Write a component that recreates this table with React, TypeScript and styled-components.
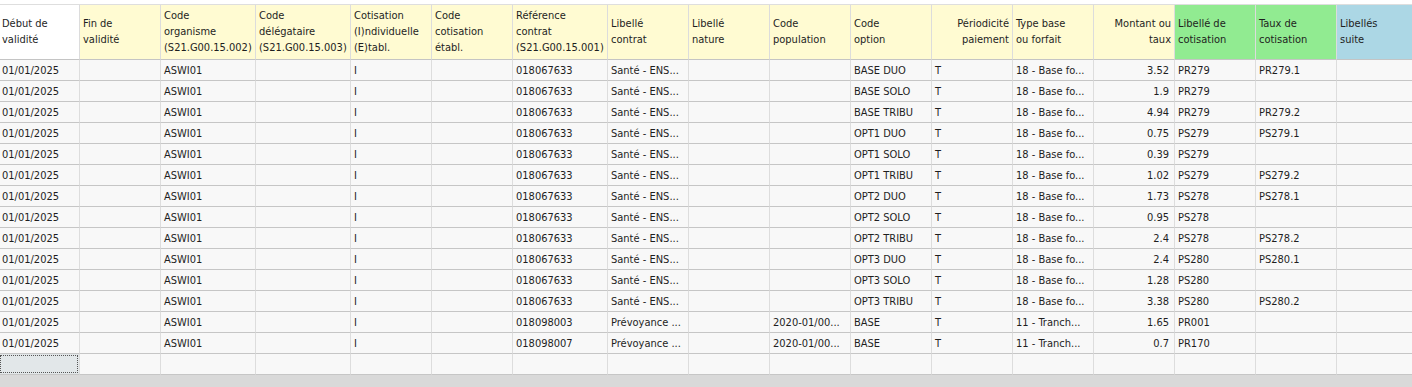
import React from "react";
import styled, { createGlobalStyle, css } from "styled-components";

const GlobalStyle = createGlobalStyle`
  html, body {
    margin: 0;
    padding: 0;
    background: #ffffff;
  }
  body {
    font-family: "DejaVu Sans Condensed", "Liberation Sans", Arial, sans-serif;
    font-size: 11px;
    color: #1e1e1e;
  }
`;

const COLS = "80px 81px 95px 95px 81px 81px 95px 81px 81px 81px 81px 81px 81px 81px 81px 81px 81px";

type Tone = "white" | "yellow" | "green" | "blue";

const toneBg: Record<Tone, string> = {
  white: "#ffffff",
  yellow: "#fffbd2",
  green: "#91eb91",
  blue: "#acd7e5",
};

const Page = styled.div`
  width: 1412px;
  height: 387px;
  overflow: hidden;
  display: flex;
  flex-direction: column;
  padding-top: 4px;
  box-sizing: border-box;
`;

const Sheet = styled.div`
  flex: 1;
  overflow: hidden;
  display: flex;
  flex-direction: column;
`;

const HeaderRow = styled.div`
  display: grid;
  grid-template-columns: ${COLS};
  width: max-content;
  border-top: 1px solid #dedede;
`;

const HeaderCell = styled.div<{ $tone: Tone; $right?: boolean; $first?: boolean }>`
  height: 55px;
  box-sizing: border-box;
  background: ${(p) => toneBg[p.$tone]};
  border-right: 1px solid #dcdcdc;
  border-bottom: 1px solid #c4c4c4;
  padding: 0 ${(p) => (p.$right ? "3px" : "3px")} 0 ${(p) => (p.$first ? "2px" : "3px")};
  display: flex;
  flex-direction: column;
  justify-content: center;
  align-items: ${(p) => (p.$right ? "flex-end" : "flex-start")};
  line-height: 16px;
  white-space: nowrap;
  overflow: hidden;
`;

const DataRow = styled.div`
  display: grid;
  grid-template-columns: ${COLS};
  width: max-content;
`;

const DataCell = styled.div<{ $right?: boolean; $first?: boolean; $selected?: boolean }>`
  height: 21px;
  box-sizing: border-box;
  background: #f8f8f8;
  border-right: 1px solid #dddddd;
  border-bottom: 1px solid #c6c6c6;
  padding: 0 ${(p) => (p.$right ? "5px" : "3px")} 0 ${(p) => (p.$first ? "2px" : "3px")};
  display: flex;
  align-items: center;
  justify-content: ${(p) => (p.$right ? "flex-end" : "flex-start")};
  white-space: nowrap;
  overflow: hidden;
  position: relative;
  ${(p) =>
    p.$selected &&
    css`
      background: #e2e7e9;
      &::after {
        content: "";
        position: absolute;
        inset: 1px 1px 1px 0;
        border: 1px dotted #555;
      }
    `}
`;

const ScrollTrack = styled.div`
  height: 12px;
  background: #d9d9d9;
  flex: none;
`;

type Header = { lines: string[]; tone: Tone; right?: boolean };

const headers: Header[] = [
  { lines: ["Début de", "validité"], tone: "white" },
  { lines: ["Fin de", "validité"], tone: "yellow" },
  { lines: ["Code", "organisme", "(S21.G00.15.002)"], tone: "yellow" },
  { lines: ["Code", "délégataire", "(S21.G00.15.003)"], tone: "yellow" },
  { lines: ["Cotisation", "(I)ndividuelle", "(E)tabl."], tone: "yellow" },
  { lines: ["Code", "cotisation", "établ."], tone: "yellow" },
  { lines: ["Référence", "contrat", "(S21.G00.15.001)"], tone: "yellow" },
  { lines: ["Libellé", "contrat"], tone: "yellow" },
  { lines: ["Libellé", "nature"], tone: "yellow" },
  { lines: ["Code", "population"], tone: "yellow" },
  { lines: ["Code", "option"], tone: "yellow" },
  { lines: ["Périodicité", "paiement"], tone: "yellow", right: true },
  { lines: ["Type base", "ou forfait"], tone: "yellow" },
  { lines: ["Montant ou", "taux"], tone: "yellow", right: true },
  { lines: ["Libellé de", "cotisation"], tone: "green" },
  { lines: ["Taux de", "cotisation"], tone: "green" },
  { lines: ["Libellés", "suite"], tone: "blue" },
];

const RIGHT_COLS = new Set([13]);

type Line = {
  ref: string;
  contrat: string;
  pop: string;
  option: string;
  type: string;
  montant: string;
  libelle: string;
  taux: string;
};

const sante = (option: string, montant: string, libelle: string, taux: string): Line => ({
  ref: "018067633",
  contrat: "Santé - ENS...",
  pop: "",
  option,
  type: "18 - Base fo...",
  montant,
  libelle,
  taux,
});

const lines: Line[] = [
  sante("BASE DUO", "3.52", "PR279", "PR279.1"),
  sante("BASE SOLO", "1.9", "PR279", ""),
  sante("BASE TRIBU", "4.94", "PR279", "PR279.2"),
  sante("OPT1 DUO", "0.75", "PS279", "PS279.1"),
  sante("OPT1 SOLO", "0.39", "PS279", ""),
  sante("OPT1 TRIBU", "1.02", "PS279", "PS279.2"),
  sante("OPT2 DUO", "1.73", "PS278", "PS278.1"),
  sante("OPT2 SOLO", "0.95", "PS278", ""),
  sante("OPT2 TRIBU", "2.4", "PS278", "PS278.2"),
  sante("OPT3 DUO", "2.4", "PS280", "PS280.1"),
  sante("OPT3 SOLO", "1.28", "PS280", ""),
  sante("OPT3 TRIBU", "3.38", "PS280", "PS280.2"),
  {
    ref: "018098003",
    contrat: "Prévoyance ...",
    pop: "2020-01/00...",
    option: "BASE",
    type: "11 - Tranch...",
    montant: "1.65",
    libelle: "PR001",
    taux: "",
  },
  {
    ref: "018098007",
    contrat: "Prévoyance ...",
    pop: "2020-01/00...",
    option: "BASE",
    type: "11 - Tranch...",
    montant: "0.7",
    libelle: "PR170",
    taux: "",
  },
];

const toCells = (l: Line): string[] => [
  "01/01/2025",
  "",
  "ASWI01",
  "",
  "I",
  "",
  l.ref,
  l.contrat,
  "",
  l.pop,
  l.option,
  "T",
  l.type,
  l.montant,
  l.libelle,
  l.taux,
  "",
];

export default function App() {
  return (
    <>
      <GlobalStyle />
      <Page>
        <Sheet>
          <HeaderRow>
            {headers.map((h, i) => (
              <HeaderCell key={i} $tone={h.tone} $right={h.right} $first={i === 0}>
                {h.lines.map((t, j) => (
                  <span key={j}>{t}</span>
                ))}
              </HeaderCell>
            ))}
          </HeaderRow>
          {lines.map((l, r) => (
            <DataRow key={r}>
              {toCells(l).map((v, c) => (
                <DataCell key={c} $right={RIGHT_COLS.has(c)} $first={c === 0}>
                  {v}
                </DataCell>
              ))}
            </DataRow>
          ))}
          <DataRow>
            {headers.map((_, c) => (
              <DataCell key={c} $first={c === 0} $selected={c === 0} />
            ))}
          </DataRow>
        </Sheet>
        <ScrollTrack />
      </Page>
    </>
  );
}
